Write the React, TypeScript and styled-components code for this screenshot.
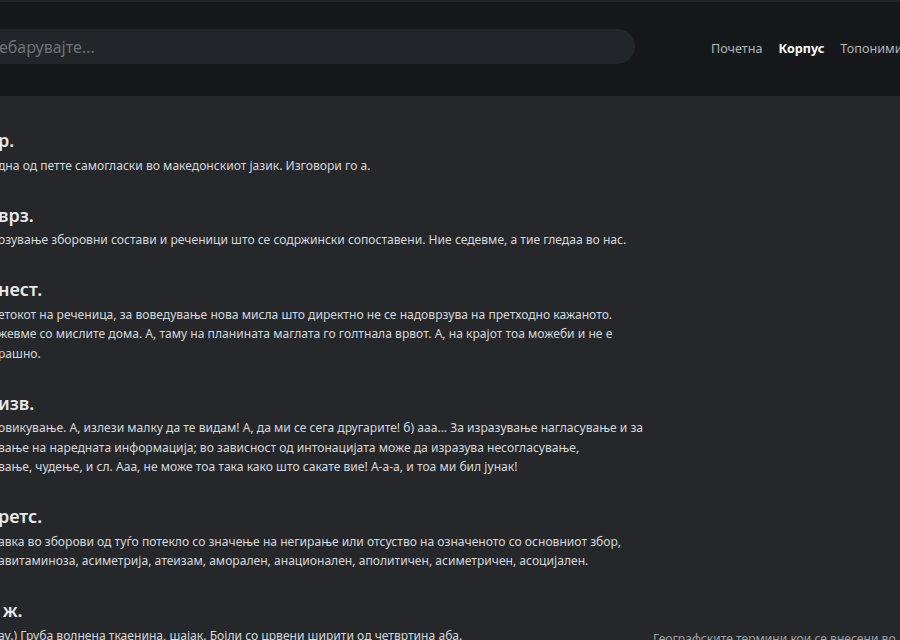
import styled, { createGlobalStyle } from "styled-components"

const GlobalStyle = createGlobalStyle`
  html, body {
    margin: 0;
    padding: 0;
    background: #25272b;
    overflow: hidden;
  }
  body {
    font-family: "Noto Sans", "Open Sans", sans-serif;
  }
`

type Entry = {
    head: string
    lines: string[]
}

const entries: Entry[] = [
    { head: "р.", lines: ["дна од петте самогласки во македонскиот јазик. Изговори го а."] },
    { head: "врз.", lines: ["озување зборовни состави и реченици што се содржински сопоставени. Ние седевме, а тие гледаа во нас."] },
    {
        head: "нест.",
        lines: [
            "етокот на реченица, за воведување нова мисла што директно не се надоврзува на претходно кажаното.",
            "жевме со мислите дома. А, таму на планината маглата го голтнала врвот. А, на крајот тоа можеби и не е",
            "рашно.",
        ],
    },
    {
        head: "изв.",
        lines: [
            "овикување. А, излези малку да те видам! А, да ми се сега другарите! б) ааа... За изразување нагласување и за",
            "вање на наредната информација; во зависност од интонацијата може да изразува несогласување,",
            "вање, чудење, и сл. Ааа, не може тоа така како што сакате вие! А-а-а, и тоа ми бил јунак!",
        ],
    },
    {
        head: "ретс.",
        lines: [
            "авка во зборови од туѓо потекло со значење на негирање или отсуство на означеното со основниот збор,",
            "авитаминоза, асиметрија, атеизам, аморален, анационален, аполитичен, асиметричен, асоцијален.",
        ],
    },
    { head: "\u00a0ж.", lines: ["ау.) Груба волнена ткаенина, шајак. Бојли со црвени ширити од четвртина аба."] },
]

const App = () => {
    return (
        <>
            <GlobalStyle />
            <Page>
                <Header>
                    <Search placeholder="ебарувајте..." />
                    <Nav>
                        <NavLink>Почетна</NavLink>
                        <NavLink $active>Корпус</NavLink>
                        <NavLink>Топоними</NavLink>
                    </Nav>
                </Header>
                <Main>
                    <List>
                        {entries.map((e, i) => (
                            <Item key={i}>
                                <Head>{e.head}</Head>
                                <Text>
                                    {e.lines.map((l, j) => (
                                        <Line key={j}>{l}</Line>
                                    ))}
                                </Text>
                            </Item>
                        ))}
                    </List>
                    <Aside>
                        <AsideNote>Географските термини кои се внесени во</AsideNote>
                    </Aside>
                </Main>
            </Page>
        </>
    )
}

export default App

const Page = styled.div`
width: 900px;
height: 640px;
overflow: hidden;
background: #25272b;
`;
const Header = styled.div`
height: 96px;
box-sizing: border-box;
border-top: 2px solid #222428;
background: #16181b;
display: flex;
align-items: flex-start;
padding-top: 27px;
`;
const Search = styled.input`
margin-left: -30px;
width: 665px;
flex-shrink: 0;
height: 35px;
box-sizing: border-box;
border: none;
outline: none;
border-radius: 18px;
background: #222529;
padding: 0 0 0 29px;
font-family: "Noto Sans", sans-serif;
font-size: 16px;
color: #c8cacd;
&::placeholder {
    color: #6f7378;
}
`;
const Nav = styled.div`
display: flex;
gap: 16px;
margin-left: 76px;
padding-top: 11px;
white-space: nowrap;
`;
const NavLink = styled.a<{ $active?: boolean }>`
font-size: 12.6px;
color: ${p => (p.$active ? "#ffffff" : "#b3b6ba")};
font-weight: ${p => (p.$active ? 700 : 400)};
cursor: pointer;
`;
const Main = styled.div`
display: flex;
padding-top: 31px;
`;
const List = styled.div`
width: 650px;
flex-shrink: 0;
margin-left: -2px;
`;
const Item = styled.div`
margin-bottom: 26.5px;
`;
const Head = styled.div`
font-size: 18px;
line-height: 26px;
font-weight: 600;
color: #e8e9ea;
margin-bottom: 2.5px;
`;
const Text = styled.div`
font-size: 12.1px;
line-height: 19.5px;
color: #d6d8db;
`;
const Line = styled.div`
white-space: nowrap;
`;
const Aside = styled.div`
padding-top: 502px;
padding-left: 5px;
`;
const AsideNote = styled.div`
font-size: 12.1px;
line-height: 19.5px;
color: #9ea1a5;
white-space: nowrap;
`;
